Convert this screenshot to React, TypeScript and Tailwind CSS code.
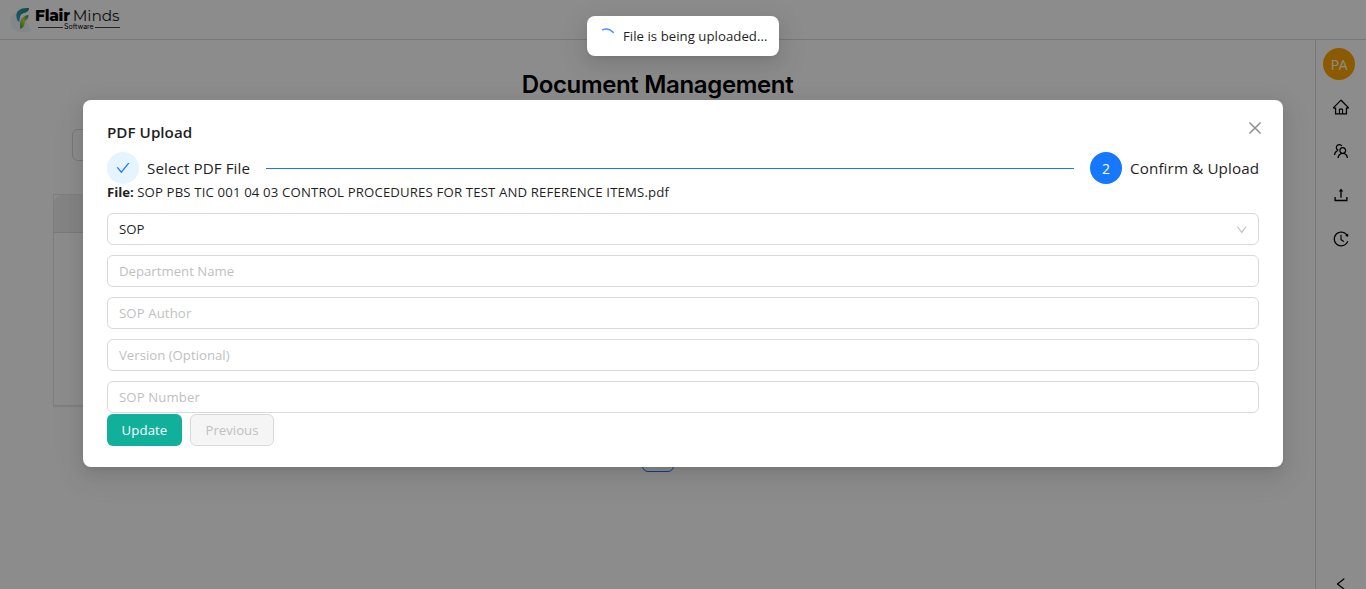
import type { ReactNode } from "react";
import {
  AiOutlineCheck,
  AiOutlineClose,
  AiOutlineDown,
  AiOutlineHistory,
  AiOutlineHome,
  AiOutlineLeft,
  AiOutlineTeam,
  AiOutlineUpload,
} from "react-icons/ai";

function Logo() {
  return (
    <div className="flex items-start pl-[10px] pt-[4px]">
      <svg width="25" height="28" viewBox="0 0 25 28">
        <defs>
          <linearGradient id="top" x1="0" y1="1" x2="1" y2="0">
            <stop offset="0" stopColor="#3a9be8" />
            <stop offset="0.5" stopColor="#2499a8" />
            <stop offset="1" stopColor="#1f8a6a" />
          </linearGradient>
          <linearGradient id="leaf" x1="0" y1="1" x2="1" y2="0">
            <stop offset="0" stopColor="#2f9e3c" />
            <stop offset="0.5" stopColor="#c3dc3a" />
            <stop offset="1" stopColor="#1d9c6e" />
          </linearGradient>
        </defs>
        <path d="M5 8 0 14l2 10 8 5 11-2-4-10z" fill="#eef4fc" />
        <path d="M6.500 13C5.500 7 10 3.500 19 4c0 3.500-3 4.500-6 5.500-3 1-3.500 4-3.500 8.500-2-1-3-2.500-3-5z" fill="url(#top)" />
        <path d="M10.500 25c-1.500-7 .5-13 8-14 0 3-1 5-3.500 6 0 4-1 6-4.500 8z" fill="url(#leaf)" />
      </svg>
      <div className="w-[85px] pt-[4px] font-[Montserrat,Inter,sans-serif] text-black">
        <div className="flex h-[15px] items-baseline whitespace-nowrap text-[15.4px] leading-[15px]">
          <span className="font-extrabold tracking-[-0.25px]">Flair</span>
          <span className="ml-[3px] font-normal tracking-[-0.1px] text-[#222]">Minds</span>
        </div>
        <div className="ml-[3px] flex h-[8px] items-center">
          <span className="h-px w-[25px] bg-[#444]" />
          <span className="px-px font-[Inter,sans-serif] text-[7px] leading-[8px]">Software</span>
          <span className="h-px flex-1 bg-[#444]" />
        </div>
      </div>
    </div>
  );
}

function Sidebar() {
  return (
    <aside className="flex w-[51px] shrink-0 flex-col items-center border-l border-[#d9d9d9] pt-2 text-[18px] text-black">
      <div className="mr-[4px] flex size-8 items-center justify-center rounded-full bg-[#ffa500] text-[14px] tracking-[-0.4px] text-white">
        PA
      </div>
      <AiOutlineHome className="mt-[18px] shrink-0" />
      <AiOutlineTeam className="mt-[26px] shrink-0" />
      <AiOutlineUpload className="mt-[26px] shrink-0" />
      <AiOutlineHistory className="mt-[26px] shrink-0" />
      <AiOutlineLeft className="mb-[-3px] mt-auto shrink-0 text-[16px]" />
    </aside>
  );
}

function Page() {
  return (
    <div className="flex h-full flex-col bg-white">
      <header className="h-10 shrink-0 border-b border-[#d9d9d9]">
        <Logo />
      </header>
      <div className="flex min-h-0 flex-1">
        <main className="flex flex-1 flex-col pl-[53px] pr-[53px]">
          <h1 className="mt-[29px] text-center font-[Inter,sans-serif] text-[24px] font-semibold leading-8 tracking-[-0.34px] text-black">
            Document Management
          </h1>
          <div className="ml-[19px] mt-[28px] h-8 w-[300px] rounded-md border border-[#d9d9d9]" />
          <div className="mt-[33px] h-[212px] border border-[#e6e6e6] shadow-[0_1px_1px_rgba(0,0,0,0.08)]">
            <div className="h-[38px] rounded-tl-lg border-b border-[#dcdcdc] bg-[#f0f0f0]" />
          </div>
          <div className="mt-[34px] size-8 self-center rounded-md border border-[#1677ff]" />
        </main>
        <Sidebar />
      </div>
    </div>
  );
}

function Field({ children }: { children: ReactNode }) {
  return (
    <div className="flex h-8 items-center justify-between rounded-md border border-[#d9d9d9] px-[11px] pt-px text-[#bfbfbf]">
      {children}
    </div>
  );
}

function UploadDialog() {
  return (
    <section className="relative h-[367px] w-[1200px] rounded-lg bg-white px-6 pt-5 shadow-[0_6px_16px_0_rgba(0,0,0,0.08),0_3px_6px_-4px_rgba(0,0,0,0.12),0_9px_28px_8px_rgba(0,0,0,0.05)]">
      <AiOutlineClose className="absolute right-[19px] top-[19px] text-[18px] text-[#8c8c8c]" />
      <h2 className="text-[15.2px] font-semibold leading-6 tracking-[0.02px]">PDF Upload</h2>
      <div className="mt-2 flex h-8 items-center text-[15.2px]">
        <span className="flex size-8 items-center justify-center rounded-full bg-[#e6f4ff] text-[16px] text-[#1677ff]">
          <AiOutlineCheck />
        </span>
        <span className="ml-2 w-[103px] whitespace-nowrap tracking-[0.08px]">Select PDF File</span>
        <span className="mx-4 h-px flex-1 bg-[#1677ff]" />
        <span className="flex size-8 items-center justify-center rounded-full bg-[#1677ff] pt-px text-[14px] text-white">
          2
        </span>
        <span className="ml-2 w-[129px] whitespace-nowrap tracking-[0.12px]">Confirm &amp; Upload</span>
      </div>
      <p className="h-[29px] whitespace-nowrap pt-px text-[13.2px] leading-[14px] tracking-[0.145px]">
        <strong className="font-bold tracking-[-0.05px]">File:</strong> SOP PBS TIC 001 04 03 CONTROL PROCEDURES FOR TEST AND REFERENCE ITEMS.pdf
      </p>
      <div className="flex flex-col gap-[10px]">
        <Field>
          <span className="text-[#1f1f1f]">SOP</span>
          <AiOutlineDown className="-mr-px text-[13.500px]" />
        </Field>
        <Field>Department Name</Field>
        <Field>
          <span className="tracking-[0.1px]">SOP Author</span>
        </Field>
        <Field>Version (Optional)</Field>
        <Field>
          <span className="tracking-[0.1px]">SOP Number</span>
        </Field>
      </div>
      <div className="mt-px flex gap-2">
        <button className="h-8 w-[75px] rounded-md bg-[#10b09a] pt-px tracking-[0.1px] text-white">Update</button>
        <button className="h-8 w-[84px] rounded-md border border-[#d9d9d9] bg-[#f5f5f5] pt-px text-[#bfbfbf]">
          Previous
        </button>
      </div>
    </section>
  );
}

function Toast() {
  return (
    <div className="absolute left-1/2 top-4 flex h-10 w-[192px] -translate-x-1/2 items-center rounded-lg bg-white pl-3 shadow-[0_6px_16px_0_rgba(0,0,0,0.08),0_3px_6px_-4px_rgba(0,0,0,0.12),0_9px_28px_8px_rgba(0,0,0,0.05)]">
      <svg width="16" height="16" viewBox="0 0 16 16" fill="none">
        <path d="M3.500 1.800Q9.500-.6 14.300 4.400" stroke="#4a94ff" strokeWidth="1.400" strokeLinecap="round" />
      </svg>
      <span className="ml-2 whitespace-nowrap pt-px tracking-[0.04px]">File is being uploaded...</span>
    </div>
  );
}

export default function App() {
  return (
    <div className="relative h-[589px] w-[1366px] overflow-hidden font-['Open_Sans','Noto_Sans',sans-serif] text-[13.2px] text-[#1f1f1f]">
      <Page />
      <div className="absolute inset-0 flex items-start justify-center bg-black/45 pt-[100px]">
        <UploadDialog />
      </div>
      <Toast />
    </div>
  );
}
